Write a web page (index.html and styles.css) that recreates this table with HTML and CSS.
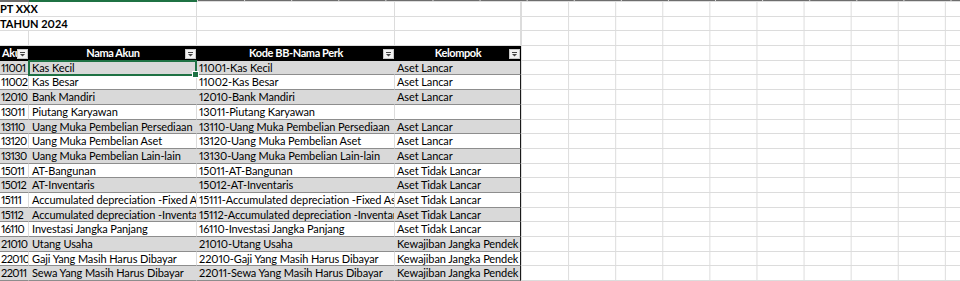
FILE: index.html
```html
<!DOCTYPE html>
<html>
<head>
<meta charset="utf-8">
<link rel="stylesheet" href="styles.css">
</head>
<body>
<div class="topbar"><div class="tb a"></div><div class="tb b sel"></div><div class="tb rest"></div></div>
<div class="sheet">
  <div class="row"><div class="c a title">PT XXX</div><div class="c b"></div><div class="c cc"></div><div class="c d"></div><div class="rest"></div></div>
  <div class="row"><div class="c ab title">TAHUN 2024</div><div class="c cc"></div><div class="c d"></div><div class="rest"></div></div>
  <div class="row"><div class="c a"></div><div class="c b"></div><div class="c cc"></div><div class="c d"></div><div class="rest"></div></div>
  <div class="row head">
    <div class="c a h">Akun<span class="dd"><svg viewBox="0 0 11 10" width="11" height="10"><rect x="3" y="3" width="5" height="1" fill="#444"/><polygon points="3,5 8,5 5.5,7.5" fill="#444"/></svg></span></div>
    <div class="c b h">Nama Akun<span class="dd"><svg viewBox="0 0 11 10" width="11" height="10"><rect x="3" y="3" width="5" height="1" fill="#444"/><polygon points="3,5 8,5 5.5,7.5" fill="#444"/></svg></span></div>
    <div class="c cc h">Kode BB-Nama Perk<span class="dd"><svg viewBox="0 0 11 10" width="11" height="10"><rect x="3" y="3" width="5" height="1" fill="#444"/><polygon points="3,5 8,5 5.5,7.5" fill="#444"/></svg></span></div>
    <div class="c d h">Kelompok<span class="dd"><svg viewBox="0 0 11 10" width="11" height="10"><rect x="3" y="3" width="5" height="1" fill="#444"/><polygon points="3,5 8,5 5.5,7.5" fill="#444"/></svg></span></div>
    <div class="rest"></div>
  </div>
  <div class="row t g"><div class="c a">11001</div><div class="c b active">Kas Kecil</div><div class="c cc">11001-Kas Kecil</div><div class="c d">Aset Lancar</div><div class="rest"></div></div>
  <div class="row t"><div class="c a">11002</div><div class="c b">Kas Besar</div><div class="c cc">11002-Kas Besar</div><div class="c d">Aset Lancar</div><div class="rest"></div></div>
  <div class="row t g"><div class="c a">12010</div><div class="c b">Bank Mandiri</div><div class="c cc">12010-Bank Mandiri</div><div class="c d">Aset Lancar</div><div class="rest"></div></div>
  <div class="row t"><div class="c a">13011</div><div class="c b">Piutang Karyawan</div><div class="c cc">13011-Piutang Karyawan</div><div class="c d"></div><div class="rest"></div></div>
  <div class="row t g"><div class="c a">13110</div><div class="c b">Uang Muka Pembelian Persediaan</div><div class="c cc">13110-Uang Muka Pembelian Persediaan</div><div class="c d">Aset Lancar</div><div class="rest"></div></div>
  <div class="row t"><div class="c a">13120</div><div class="c b">Uang Muka Pembelian Aset</div><div class="c cc">13120-Uang Muka Pembelian Aset</div><div class="c d">Aset Lancar</div><div class="rest"></div></div>
  <div class="row t g"><div class="c a">13130</div><div class="c b">Uang Muka Pembelian Lain-lain</div><div class="c cc">13130-Uang Muka Pembelian Lain-lain</div><div class="c d">Aset Lancar</div><div class="rest"></div></div>
  <div class="row t"><div class="c a">15011</div><div class="c b">AT-Bangunan</div><div class="c cc">15011-AT-Bangunan</div><div class="c d">Aset Tidak Lancar</div><div class="rest"></div></div>
  <div class="row t g"><div class="c a">15012</div><div class="c b">AT-Inventaris</div><div class="c cc">15012-AT-Inventaris</div><div class="c d">Aset Tidak Lancar</div><div class="rest"></div></div>
  <div class="row t"><div class="c a">15111</div><div class="c b">Accumulated depreciation -Fixed Assets</div><div class="c cc">15111-Accumulated depreciation -Fixed Assets</div><div class="c d">Aset Tidak Lancar</div><div class="rest"></div></div>
  <div class="row t g"><div class="c a">15112</div><div class="c b">Accumulated depreciation -Inventaris</div><div class="c cc">15112-Accumulated depreciation -Inventaris</div><div class="c d">Aset Tidak Lancar</div><div class="rest"></div></div>
  <div class="row t"><div class="c a">16110</div><div class="c b">Investasi Jangka Panjang</div><div class="c cc">16110-Investasi Jangka Panjang</div><div class="c d">Aset Tidak Lancar</div><div class="rest"></div></div>
  <div class="row t g"><div class="c a">21010</div><div class="c b">Utang Usaha</div><div class="c cc">21010-Utang Usaha</div><div class="c d">Kewajiban Jangka Pendek</div><div class="rest"></div></div>
  <div class="row t"><div class="c a">22010</div><div class="c b">Gaji Yang Masih Harus Dibayar</div><div class="c cc">22010-Gaji Yang Masih Harus Dibayar</div><div class="c d">Kewajiban Jangka Pendek</div><div class="rest"></div></div>
  <div class="row t g"><div class="c a">22011</div><div class="c b">Sewa Yang Masih Harus Dibayar</div><div class="c cc">22011-Sewa Yang Masih Harus Dibayar</div><div class="c d">Kewajiban Jangka Pendek</div><div class="rest"></div></div>
</div>
</body>
</html>
```
FILE: styles.css
```css
* { box-sizing: border-box; }
html, body { margin: 0; padding: 0; background: #fff; }
body {
  font-family: Lato, "Noto Sans", sans-serif;
  font-size: 11px;
  font-variant-numeric: proportional-nums;
  color: #000;
  overflow: hidden;
  width: 960px;
  height: 281px;
}
.topbar { display: flex; height: 2px; }
.tb { background: #6d6d6d; }
.tb.a { width: 29px; }
.tb.b { width: 168px; }
.tb.sel { background: #1f7244; }
.tb.rest { flex: 1; }

.sheet { display: flex; flex-direction: column; }
.row { display: flex; height: 14.7px; flex: none; }
.c {
  height: 100%;
  white-space: nowrap;
  overflow: hidden;
  border-right: 1px solid #dcdcdc;
  border-bottom: 1px solid #dcdcdc;
  line-height: 14px;
  padding-left: 2px;
  flex: none;
  letter-spacing: -0.1px;
}
.a { width: 29px; }
.b { width: 168px; padding-left: 3px; }
.ab { width: 197px; }
.cc { width: 198px; }
.d { width: 126px; }
.rest {
  flex: 1;
  height: 100%;
  border-bottom: 1px solid #dcdcdc;
  background-image: linear-gradient(to right, #dcdcdc 0 1px, transparent 1px);
  background-size: 47.1px 100%;
  background-repeat: repeat-x;
}
.title { font-weight: 700; padding-left: 0; overflow: visible; letter-spacing: 0; }

.head .h {
  background: #000;
  color: #fff;
  font-weight: 700;
  letter-spacing: -0.4px;
  text-align: center;
  padding-left: 0;
  border-right: none;
  border-bottom: 1px solid #000;
  position: relative;
}
.head .a { text-align: left; padding-left: 2px; }
.dd {
  position: absolute;
  right: 1px;
  top: 3px;
  width: 11px;
  height: 10px;
  background: #f3f3f3;
  border: 1px solid #c9c9c9;
  display: flex;
  align-items: center;
  justify-content: center;
}
.dd svg { display: block; margin: -1px; }

.t .c {
  border-right: 1px solid #dcdcdc;
  border-bottom: 1px solid #8d8d8d;
  background: #fff;
}
.t .c.a { padding-left: 1px; letter-spacing: -0.6px; }
.t.g .c { background: #d9d9d9; border-right-color: #d9d9d9; }
.t .c.d { border-right: 1px solid #1a1a1a; }

.active { position: relative; overflow: visible; }
.active::after {
  content: "";
  position: absolute;
  left: -1px;
  top: -1px;
  right: -1px;
  bottom: -2px;
  border: 2px solid #1f7244;
  pointer-events: none;
}
.active::before {
  content: "";
  position: absolute;
  right: -3px;
  bottom: -4px;
  width: 5px;
  height: 5px;
  background: #1f7244;
  border: 1px solid #fff;
  z-index: 2;
}
```
